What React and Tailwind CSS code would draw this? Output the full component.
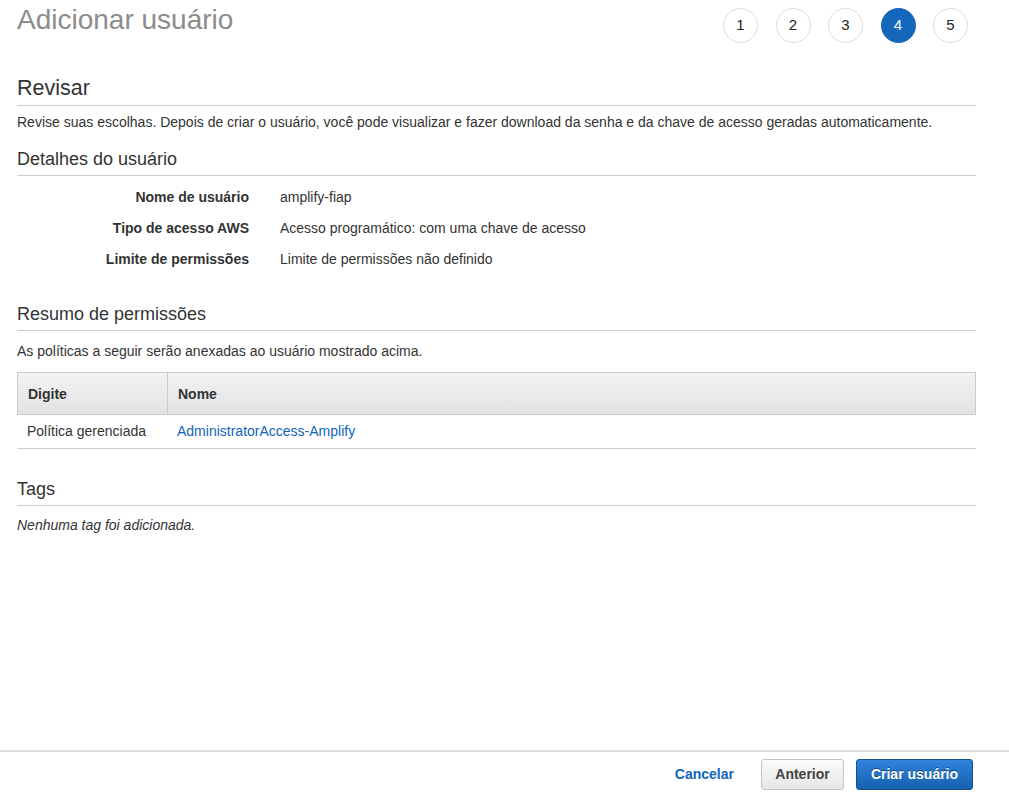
import React from "react";

const font = { fontFamily: '"Liberation Sans", Arial, Helvetica, sans-serif' };

function Step({ n, active }) {
  return (
    <div
      className={
        "w-[35px] h-[35px] rounded-full flex items-center justify-center text-[15px] " +
        (active
          ? "bg-[#1467bb] text-white border border-[#1467bb]"
          : "bg-white text-[#222] border border-[#dcdcdc]")
      }
    >
      {n}
    </div>
  );
}

function SectionHeading({ children, big }) {
  return (
    <div
      className={
        "border-b border-[#cccccc] text-[#333] " +
        (big ? "text-[21.5px] leading-[26px] pb-[4px]" : "text-[18px] leading-[22px] pb-[5px]")
      }
    >
      {children}
    </div>
  );
}

function DetailRow({ label, value }) {
  return (
    <div className="flex items-center h-[31px] text-[14px] leading-[20px]">
      <div className="w-[232px] text-right font-bold text-[#333]">{label}</div>
      <div className="ml-[31px] text-[#333]">{value}</div>
    </div>
  );
}

export default function App() {
  return (
    <div style={font} className="min-h-screen h-[797px] flex flex-col bg-white text-[#333]">
      <div className="flex-1 pl-[17px] pr-[33px]">
        <div className="flex justify-between items-start">
          <div className="mt-[3px] text-[28px] leading-[34px] text-[#8c8c8c]">Adicionar usuário</div>
          <div className="flex gap-[17.5px] pt-[8px] mr-[8px]">
            <Step n="1" />
            <Step n="2" />
            <Step n="3" />
            <Step n="4" active />
            <Step n="5" />
          </div>
        </div>

        <div className="mt-[32px]">
          <SectionHeading big>Revisar</SectionHeading>
        </div>
        <p className="mt-[6px] text-[14px] leading-[20px] text-[#333]">
          Revise suas escolhas. Depois de criar o usuário, você pode visualizar e fazer download da senha e da chave de acesso geradas automaticamente.
        </p>

        <div className="mt-[16px]">
          <SectionHeading>Detalhes do usuário</SectionHeading>
        </div>
        <div className="mt-[5px]">
          <DetailRow label="Nome de usuário" value="amplify-fiap" />
          <DetailRow label="Tipo de acesso AWS" value="Acesso programático: com uma chave de acesso" />
          <DetailRow label="Limite de permissões" value="Limite de permissões não definido" />
        </div>

        <div className="mt-[29px]">
          <SectionHeading>Resumo de permissões</SectionHeading>
        </div>
        <p className="mt-[10px] text-[14px] leading-[20px] text-[#333]">
          As políticas a seguir serão anexadas ao usuário mostrado acima.
        </p>

        <div className="mt-[11px] text-[14px] leading-[20px]">
          <div className="flex h-[43px] border border-[#cccccc] bg-gradient-to-b from-[#f2f2f2] to-[#e3e3e3] font-bold text-[#333]">
            <div className="w-[150px] px-[10px] flex items-center border-r border-[#cccccc]">Digite</div>
            <div className="flex-1 px-[10px] flex items-center">Nome</div>
          </div>
          <div className="flex h-[34px] pb-[1px] border-b border-[#cccccc]">
            <div className="w-[150px] px-[10px] flex items-center text-[#333]">Política gerenciada</div>
            <div className="flex-1 px-[10px] flex items-center text-[#1166bb]">AdministratorAccess-Amplify</div>
          </div>
        </div>

        <div className="mt-[29px]">
          <SectionHeading>Tags</SectionHeading>
        </div>
        <p className="mt-[9px] text-[14px] leading-[20px] italic text-[#333]">Nenhuma tag foi adicionada.</p>
      </div>

      <div className="h-[47px] border-t-2 border-[#dddddd] flex items-center justify-end pr-[36px] text-[14px]">
        <button className="font-bold text-[#1166bb] mr-[27px]">Cancelar</button>
        <button className="h-[31px] w-[83px] rounded-[3px] border border-[#c4c4c4] bg-gradient-to-b from-[#fbfbfb] to-[#e6e6e6] font-bold text-[#444] mr-[12px]">
          Anterior
        </button>
        <button
          className="h-[31px] w-[117px] rounded-[3px] border border-[#15508c] bg-gradient-to-b from-[#2f84da] to-[#1660b0] font-bold text-white"
          style={{ textShadow: "0 -1px 0 rgba(0,0,0,0.45)" }}
        >
          Criar usuário
        </button>
      </div>
    </div>
  );
}
